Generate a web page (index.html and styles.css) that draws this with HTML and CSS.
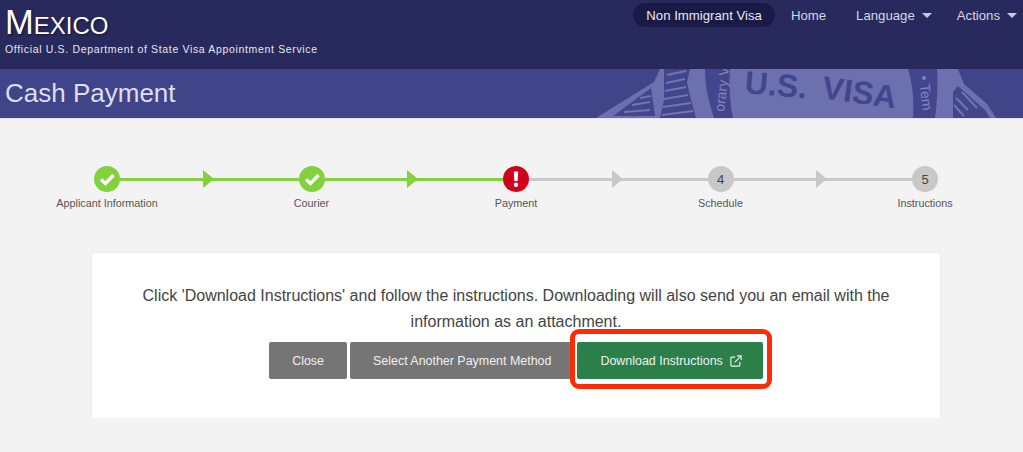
FILE: index.html
```html
<!DOCTYPE html>
<html lang="en">

<head>
  <meta charset="UTF-8">
  <meta name="viewport" content="width=device-width, initial-scale=1.0">
  <title>Cash Payment</title>
  <link rel="stylesheet" href="styles.css">
</head>

<body>

  <!-- top header -->
  <header class="site-header">
    <div class="brand">
      <div class="brand-name">Mexico</div>
      <div class="brand-sub">Official U.S. Department of State Visa Appointment Service</div>
    </div>
    <nav class="nav">
      <a class="nav-item nav-pill">Non Immigrant Visa</a>
      <a class="nav-item nav-home">Home</a>
      <a class="nav-item nav-drop">Language</a>
      <a class="nav-item nav-drop">Actions</a>
    </nav>
  </header>

  <!-- page title with the seal behind it -->
  <div class="title-band">
    <svg class="seal" viewBox="0 69 1023 49" width="1023" height="49" xmlns="http://www.w3.org/2000/svg">
      <path class="seal-light" d="M596 118 L654 82 L660 69 L958 69 L964 84 L987 104 L996 118 Z" />
      <path class="seal-dark" d="M613 116 L651 88 L655 116 Z" />
      <path class="seal-dark" d="M664 69 L690 69 L687 82 L690 96 L696 118 L660 118 L664 100 Z" />
      <path class="seal-stripe" d="M667 75 L686 71 M666 83 L685 79 M665 91 L686 87 M664 99 L688 95 M663 107 L691 103 M662 115 L693 111" />
      <path class="seal-stripe" d="M624 112 L650 110 M632 105 L650 102 M640 98 L651 96" />
      <path class="seal-dark" d="M705 69 L730 69 C729 85 730 105 733 118 L714 118 C708 100 705 85 705 69 Z" />
      <path class="seal-dark" d="M908 69 L937 69 C938 85 937 105 935 118 L913 118 C914 100 913 85 908 69 Z" />
      <path class="seal-dark" d="M953 92 L958 86 L985 110 L990 118 L953 118 Z" />
      <path class="seal-stripe" d="M956 98 L968 110 M954 105 L964 116 M962 92 L977 108" />
      <text class="seal-text" x="744" y="93" transform="rotate(5 744 93)">U.S.</text>
      <text class="seal-text" x="821" y="98" transform="rotate(8 821 98)">VISA</text>
      <text class="seal-ring" transform="translate(724 112) rotate(-83)">orary V</text>
      <text class="seal-ring" transform="translate(919 76) rotate(84)">• Tem</text>
    </svg>
    <h1 class="page-title">Cash Payment</h1>
  </div>

  <main class="content">

    <!-- steps -->
    <div class="stepper">
      <div class="step">
        <span class="step-dot done">
          <svg viewBox="0 0 26 26" width="26" height="26"><path class="tick" d="M7 13.5 L11.500 17.500 L19.500 9" /></svg>
        </span>
        <span class="step-label">Applicant Information</span>
      </div>
      <div class="connector done"></div>
      <div class="step">
        <span class="step-dot done">
          <svg viewBox="0 0 26 26" width="26" height="26"><path class="tick" d="M7 13.5 L11.500 17.500 L19.500 9" /></svg>
        </span>
        <span class="step-label">Courier</span>
      </div>
      <div class="connector done"></div>
      <div class="step">
        <span class="step-dot alert">
          <svg viewBox="0 0 26 26" width="26" height="26">
            <path d="M10.800 5.500 H15.200 L14.600 15 H11.400 Z" fill="#fff" />
            <circle cx="13" cy="18.800" r="2.200" fill="#fff" />
          </svg>
        </span>
        <span class="step-label">Payment</span>
      </div>
      <div class="connector"></div>
      <div class="step">
        <span class="step-dot">4</span>
        <span class="step-label">Schedule</span>
      </div>
      <div class="connector"></div>
      <div class="step">
        <span class="step-dot">5</span>
        <span class="step-label">Instructions</span>
      </div>
    </div>

    <!-- card -->
    <section class="card">
      <p class="card-text">Click 'Download Instructions' and follow the instructions. Downloading will also send you an email with the information as an attachment.</p>
      <div class="actions">
        <button class="btn">Close</button>
        <button class="btn">Select Another Payment Method</button>
        <span class="highlight">
          <button class="btn btn-green">Download Instructions
            <svg class="ext-icon" viewBox="0 0 14 14" width="12" height="12">
              <path d="M6 2.500 H2 A1 1 0 0 0 1 3.500 V12 A1 1 0 0 0 2 13 H10.500 A1 1 0 0 0 11.500 12 V8" />
              <path d="M5.500 8.500 L12.800 1.200 M8.200 1 H13 V5.800" />
            </svg>
          </button>
        </span>
      </div>
    </section>

  </main>

</body>

</html>
```

FILE: styles.css
```css
:root {
  --header-colour: #28295c;
  --band-colour: #404489;
  --page-colour: #f3f3f3;
  --green: #82d13f;
  --grey: #c8c8c8;
  --font-family: "Liberation Sans", Arial, sans-serif;
}

html,
body {
  margin: 0px;
  padding: 0px;
  background-color: var(--page-colour);
  color: #444;
  font-family: var(--font-family);
}

/* header */
.site-header {
  height: 69px;
  box-sizing: border-box;
  display: flex;
  justify-content: space-between;
  background-color: var(--header-colour);
  color: #fff;
}

.brand {
  padding: 0 0 0 5px;
}

.brand-name {
  font-size: 34.500px;
  line-height: 40px;
  padding-top: 2px;
  font-variant: small-caps;
  text-shadow: 1px 1px 2px rgba(0, 0, 0, 0.5);
}

.brand-sub {
  font-size: 10.500px;
  line-height: 14px;
  letter-spacing: 0.66px;
  color: #e6e6ee;
}

.nav {
  display: flex;
  align-items: flex-start;
  padding: 3px 6px 0 0;
  font-size: 13.200px;
  color: #d6d7e4;
}

.nav-item {
  height: 24px;
  box-sizing: border-box;
  padding-top: 1px;
  display: flex;
  align-items: center;
  margin-left: 30px;
}

.nav-item:last-child {
  margin-left: 25px;
}

.nav-pill {
  margin-left: 0;
  padding: 1px 13px 0;
  border-radius: 12px;
  background-color: #191b46;
  color: #e8e8ee;
}

.nav-home {
  margin-left: 16px;
}

.nav-drop::after {
  content: "";
  margin-left: 7px;
  border-top: 5px solid #c8c9da;
  border-left: 5px solid transparent;
  border-right: 5px solid transparent;
}

/* title band */
.title-band {
  position: relative;
  height: 49px;
  overflow: hidden;
  background-color: var(--band-colour);
  border-bottom: 1px solid #e4e5f4;
  margin-bottom: -1px;
}

.page-title {
  position: relative;
  margin: 0;
  padding-left: 5px;
  font-size: 26px;
  font-weight: 400;
  line-height: 49px;
  color: #dcdef2;
}

.seal {
  position: absolute;
  top: 0;
  left: 0;
}

.seal-light {
  fill: #6d70ae;
}

.seal-dark {
  fill: #42468d;
}

.seal-stripe {
  fill: none;
  stroke: #7175b0;
  stroke-width: 2;
}

.seal-text {
  fill: #42468d;
  font-size: 32px;
  font-weight: 700;
}

.seal-ring {
  fill: #8285bd;
  font-size: 14px;
}

/* stepper */
.content {
  padding-top: 48px;
}

.stepper {
  display: flex;
  padding: 0 38px 0 47px;
  margin-bottom: 43px;
}

.step {
  position: relative;
  flex: none;
  width: 120px;
  display: flex;
  flex-direction: column;
  align-items: center;
}

.step-dot {
  width: 26px;
  height: 26px;
  border-radius: 50%;
  display: flex;
  align-items: center;
  justify-content: center;
  background-color: var(--grey);
  font-size: 13px;
}

.step-dot.done {
  background-color: var(--green);
}

.step-dot.alert {
  background-color: #d0021b;
}

.tick {
  fill: none;
  stroke: #fff;
  stroke-width: 3.400;
}

.step-label {
  margin-top: 4px;
  font-size: 10.800px;
  line-height: 14px;
  color: #555;
}

.connector {
  flex: 1;
  height: 3px;
  margin: 11.500px -47px 0;
  display: flex;
  align-items: center;
  justify-content: center;
  background-color: var(--grey);
}

.connector::after {
  content: "";
  flex: none;
  margin-right: 2px;
  border-left: 11px solid var(--grey);
  border-top: 9px solid transparent;
  border-bottom: 9px solid transparent;
}

.connector.done {
  background-color: var(--green);
}

.connector.done::after {
  border-left-color: var(--green);
}

/* card */
.card {
  width: 848px;
  height: 165px;
  box-sizing: border-box;
  margin-left: 92px;
  padding: 30px 40px 0;
  background-color: #fff;
  border-radius: 2px;
  box-shadow: 0 0 3px rgba(0, 0, 0, 0.08);
}

.card-text {
  margin: 0 0 7px;
  font-size: 16px;
  line-height: 26px;
  text-align: center;
}

.actions {
  display: flex;
  justify-content: center;
  gap: 3px;
}

.btn {
  height: 37px;
  padding: 0 23px;
  border: 0;
  border-radius: 2px;
  display: flex;
  align-items: center;
  gap: 7px;
  background-color: #757575;
  color: #f0f0f0;
  font-family: var(--font-family);
  font-size: 12.450px;
  white-space: nowrap;
}

.btn-green {
  padding-right: 21px;
  background-color: #2a8048;
}

.ext-icon {
  fill: none;
  stroke: #f0f0f0;
  stroke-width: 1.300;
}

.highlight {
  position: relative;
  display: block;
}

/* red marker drawn over the screenshot */
.highlight::after {
  content: "";
  position: absolute;
  top: -13px;
  right: -9px;
  bottom: -10px;
  left: -7px;
  border: 5px solid #f92c07;
  border-radius: 9px;
}
```
